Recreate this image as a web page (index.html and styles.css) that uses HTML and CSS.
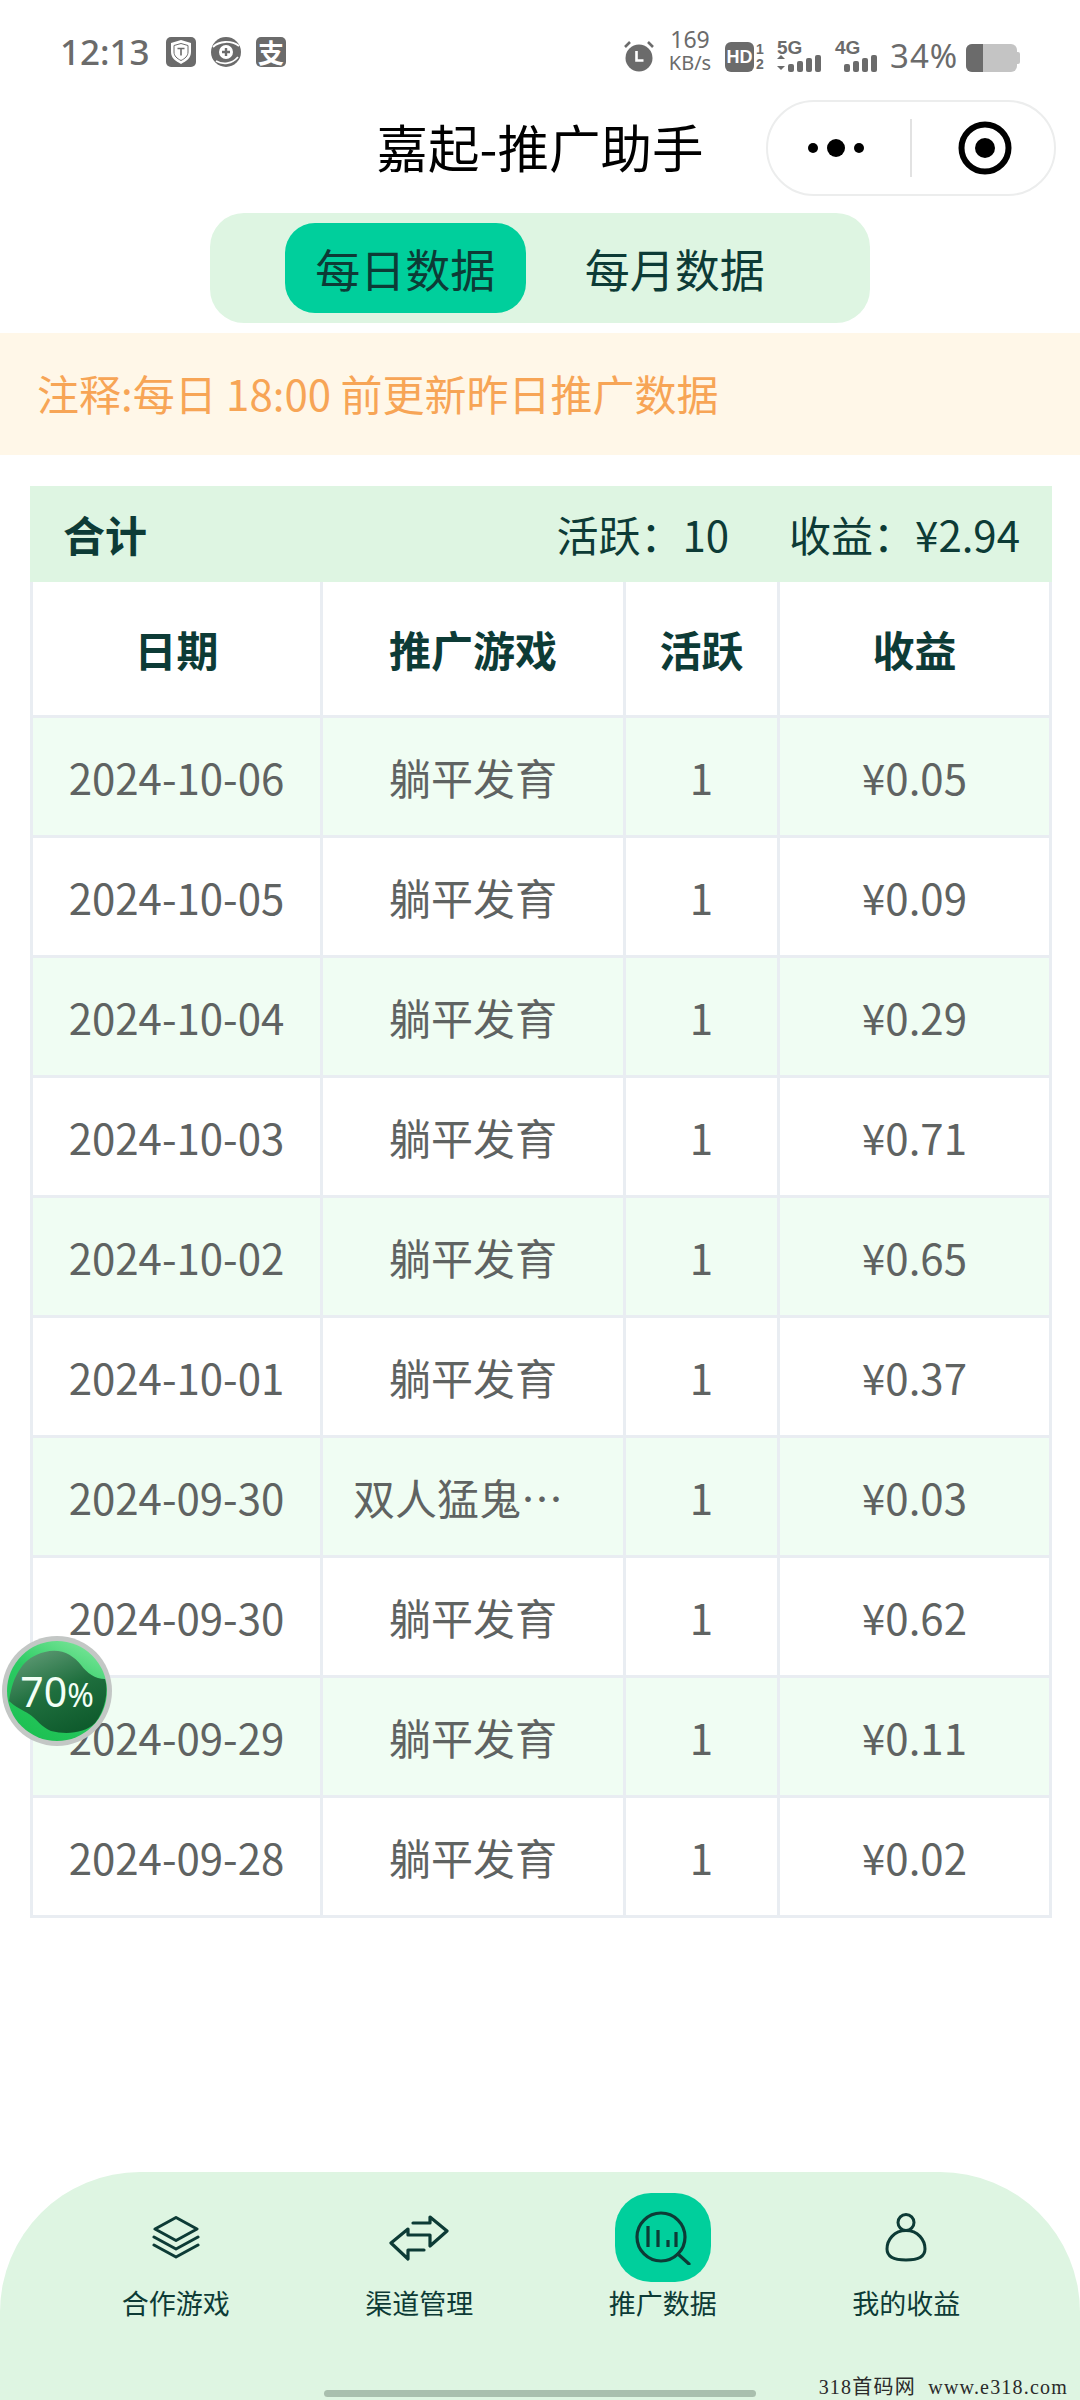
FILE: index.html
```html
<!DOCTYPE html>
<html lang="zh-CN">

<head>
  <meta charset="UTF-8">
  <meta name="viewport" content="width=device-width, initial-scale=1.0">
  <title>嘉起-推广助手</title>
  <link rel="stylesheet" href="styles.css">
</head>

<body>
  <div class="page">
    <!-- 状态栏 -->
    <div class="status-bar">
      <div class="status-left">
        <span class="time">12:13</span>
        <svg class="status-icon" width="30" height="30" viewBox="0 0 30 30">
          <rect width="30" height="30" rx="5" fill="#6b6b6b" />
          <path d="M15 3l10 3v9c0 6-4.500 9-10 12-5.500-3-10-6-10-12V6z" fill="#fff" />
          <path d="M15 6.500l7 2v6.500c0 4-3 6.500-7 8.500-4-2-7-4.500-7-8.500V8.500z" fill="none" stroke="#6b6b6b" stroke-width="1" />
          <path d="M11.500 11.500h7M15 11.500v7" stroke="#6b6b6b" stroke-width="1.600" fill="none" />
        </svg>
        <svg class="status-icon" width="30" height="30" viewBox="0 0 30 30">
          <circle cx="15" cy="15" r="15" fill="#6b6b6b" />
          <path d="M2 10c6-6 18-7 26-1" stroke="#fff" stroke-width="1.800" fill="none" />
          <path d="M5 24c7 4 16 3 22-4" stroke="#fff" stroke-width="1.800" fill="none" />
          <circle cx="15" cy="15" r="7" fill="#fff" />
          <path d="M11 15h8M15 11v8" stroke="#6b6b6b" stroke-width="2.400" />
        </svg>
        <span class="alipay">支</span>
      </div>
      <div class="status-right">
        <svg width="30" height="32" viewBox="0 0 30 32">
          <circle cx="15" cy="18" r="13.500" fill="#6b6b6b" />
          <path d="M12.500 11v9.500h7" stroke="#fff" stroke-width="2.600" fill="none" />
          <path d="M1 7l5-5M29 7l-5-5" stroke="#6b6b6b" stroke-width="2.600" />
        </svg>
        <div class="speed"><span class="speed-num">169</span><span>KB/s</span></div>
        <div class="hd-wrap">
          <span class="hd">HD</span>
          <div class="sim-nums"><span>1</span><span>2</span></div>
        </div>
        <div class="signal">
          <span class="signal-name">5G</span>
          <svg width="46" height="17" viewBox="0 0 46 17">
            <path d="M0 4l4-4 4 4zM0 11h8l-4 4z" fill="#6b6b6b" />
            <rect x="11" y="9" width="6" height="8" rx="2" fill="#6b6b6b" />
            <rect x="20" y="6" width="6" height="11" rx="2" fill="#6b6b6b" />
            <rect x="29" y="3" width="6" height="14" rx="2" fill="#6b6b6b" />
            <rect x="38" y="0" width="6" height="17" rx="2" fill="#6b6b6b" />
          </svg>
        </div>
        <div class="signal signal-second">
          <span class="signal-name">4G</span>
          <svg width="44" height="17" viewBox="0 0 44 17">
            <rect x="9" y="9" width="6" height="8" rx="2" fill="#6b6b6b" />
            <rect x="18" y="6" width="6" height="11" rx="2" fill="#6b6b6b" />
            <rect x="27" y="3" width="6" height="14" rx="2" fill="#6b6b6b" />
            <rect x="36" y="0" width="6" height="17" rx="2" fill="#6b6b6b" />
          </svg>
        </div>
        <span class="battery-text">34%</span>
        <div class="battery">
          <div class="battery-body">
            <div class="battery-level"></div>
          </div>
          <div class="battery-tip"></div>
        </div>
      </div>
    </div>

    <!-- 标题栏 -->
    <div class="nav-bar">
      <div class="nav-title">嘉起-推广助手</div>
      <div class="capsule">
        <svg width="56" height="20" viewBox="0 0 56 20">
          <circle cx="5" cy="10" r="5" fill="#000" />
          <circle cx="28" cy="10" r="9" fill="#000" />
          <circle cx="51" cy="10" r="5" fill="#000" />
        </svg>
        <div class="capsule-line"></div>
        <svg width="54" height="54" viewBox="0 0 54 54">
          <circle cx="27" cy="27" r="23.500" fill="none" stroke="#000" stroke-width="6" />
          <circle cx="27" cy="27" r="10" fill="#000" />
        </svg>
      </div>
    </div>

    <div class="tabs">
      <div class="tab active">每日数据</div>
      <div class="tab">每月数据</div>
    </div>

    <div class="notice">注释:每日 18:00 前更新昨日推广数据</div>

    <div class="data-wrap">
      <div class="summary">
        <strong>合计</strong>
        <div class="summary-right">
          <span>活跃：10</span>
          <span>收益：¥2.94</span>
        </div>
      </div>
      <table class="data-table">
        <colgroup>
          <col class="col-date">
          <col class="col-game">
          <col class="col-active">
          <col class="col-income">
        </colgroup>
        <thead>
          <tr>
            <th>日期</th>
            <th>推广游戏</th>
            <th>活跃</th>
            <th>收益</th>
          </tr>
        </thead>
        <tbody>
          <tr><td>2024-10-06</td><td>躺平发育</td><td>1</td><td>¥0.05</td></tr>
          <tr><td>2024-10-05</td><td>躺平发育</td><td>1</td><td>¥0.09</td></tr>
          <tr><td>2024-10-04</td><td>躺平发育</td><td>1</td><td>¥0.29</td></tr>
          <tr><td>2024-10-03</td><td>躺平发育</td><td>1</td><td>¥0.71</td></tr>
          <tr><td>2024-10-02</td><td>躺平发育</td><td>1</td><td>¥0.65</td></tr>
          <tr><td>2024-10-01</td><td>躺平发育</td><td>1</td><td>¥0.37</td></tr>
          <tr><td>2024-09-30</td><td class="cell-clip">双人猛鬼…</td><td>1</td><td>¥0.03</td></tr>
          <tr><td>2024-09-30</td><td>躺平发育</td><td>1</td><td>¥0.62</td></tr>
          <tr><td>2024-09-29</td><td>躺平发育</td><td>1</td><td>¥0.11</td></tr>
          <tr><td>2024-09-28</td><td>躺平发育</td><td>1</td><td>¥0.02</td></tr>
        </tbody>
      </table>
    </div>

    <!-- 底部导航 -->
    <div class="tab-bar">
      <div class="tab-item">
        <div class="tab-icon">
          <svg width="48" height="43" viewBox="0 0 48 43" fill="none" stroke="#0d3b36" stroke-width="3" stroke-linejoin="round" stroke-linecap="round">
            <path d="M24 1.500l21 11.500-21 11.500L3 13z" />
            <path d="M2 21l22 12 22-12" />
            <path d="M2 29l22 12 22-12" />
          </svg>
        </div>
        <span>合作游戏</span>
      </div>
      <div class="tab-item">
        <div class="tab-icon">
          <svg width="60" height="46" viewBox="0 0 60 46" fill="none" stroke="#0d3b36" stroke-width="3.200" stroke-linejoin="round" stroke-linecap="round">
            <path d="M24 8h17V2l17 14-17 15v-11H19v-6L2 28l17 16v-9h16" />
          </svg>
        </div>
        <span>渠道管理</span>
      </div>
      <div class="tab-item">
        <div class="tab-icon tab-icon-active">
          <svg width="56" height="54" viewBox="0 0 56 54" fill="none" stroke="#0d3b36" stroke-linecap="round">
            <circle cx="26" cy="26" r="24" stroke-width="3.200" />
            <path d="M43 43l11 10" stroke-width="3.200" />
            <path d="M13 15v21M23 19v17M33 29v7M41 21v15" stroke-width="3.200" stroke-linecap="butt" />
          </svg>
        </div>
        <span>推广数据</span>
      </div>
      <div class="tab-item">
        <div class="tab-icon">
          <svg width="42" height="49" viewBox="0 0 42 49" fill="none" stroke="#0d3b36" stroke-width="3">
            <circle cx="21" cy="9.500" r="8" />
            <path d="M21 17.500C9 17.500 2 27 2 36c0 8 7 11 19 11s19-3 19-11c0-9-7-18.500-19-18.500z" />
          </svg>
        </div>
        <span>我的收益</span>
      </div>
      <div class="home-bar"></div>
    </div>

    <div class="watermark">318首码网  www.e318.com</div>

    <!-- 悬浮球 -->
    <div class="float-ball">
      <svg width="112" height="112" viewBox="0 0 112 112">
        <defs>
          <linearGradient id="ballRim" x1="0.8" y1="0" x2="0.3" y2="1">
            <stop offset="0" stop-color="#7be69a" />
            <stop offset="0.45" stop-color="#2ccb63" />
            <stop offset="1" stop-color="#1cc052" />
          </linearGradient>
          <linearGradient id="ballFill" x1="0.2" y1="0" x2="0.7" y2="1">
            <stop offset="0" stop-color="#5f9a75" />
            <stop offset="0.5" stop-color="#1f6f3e" />
            <stop offset="1" stop-color="#0e5a2c" />
          </linearGradient>
        </defs>
        <circle cx="56" cy="56" r="55" fill="#c3c7c5" />
        <circle cx="56" cy="56" r="50" fill="url(#ballRim)" />
        <path d="M8 66C12 40 22 22 44 17c16-4 28 3 36 13 6 8 14 14 24 14 4 12 0 32-10 44-10 10-28 12-44 8-10-4-14-12-22-17-6-4-14-7-20-13z" fill="url(#ballFill)" />
      </svg>
      <span class="ball-text">70<span class="ball-percent">%</span></span>
    </div>
  </div>
</body>

</html>
```

FILE: styles.css
```css
* {
  box-sizing: border-box;
}

html,
body {
  margin: 0;
  padding: 0;
  background-color: #fff;
}

body {
  font-family: 'Noto Sans CJK SC', 'Noto Sans', sans-serif;
  color: #0d3b36;
}

.page {
  position: relative;
  width: 1080px;
  height: 2400px;
  overflow: hidden;
  display: flex;
  flex-direction: column;
}

.status-bar {
  height: 100px;
  padding: 32px 60px 0 60px;
  display: flex;
  justify-content: space-between;
  align-items: flex-start;
  color: #6b6b6b;
}

.status-left {
  display: flex;
  align-items: center;
  height: 40px;
}

.time {
  width: 91px;
  font-family: 'Noto Sans', sans-serif;
  font-size: 35px;
  font-weight: 500;
  line-height: 40px;
  margin-right: 15px;
  white-space: nowrap;
}

.status-icon {
  margin-right: 15px;
}

.alipay {
  width: 30px;
  height: 30px;
  border-radius: 5px;
  background-color: #6b6b6b;
  color: #fff;
  font-size: 26px;
  font-weight: 700;
  line-height: 30px;
  text-align: center;
}

.status-right {
  display: flex;
  align-items: flex-end;
  height: 40px;
}

.speed {
  width: 44px;
  display: flex;
  flex-direction: column;
  align-items: center;
  margin-left: 14px;
  margin-bottom: -3px;
  font-family: 'Noto Sans', sans-serif;
  font-size: 20px;
  line-height: 24px;
  white-space: nowrap;
}

.speed-num {
  font-size: 23px;
  line-height: 24px;
}

.hd-wrap {
  display: flex;
  align-items: center;
  margin-left: 13px;
}

.hd {
  width: 29px;
  height: 30px;
  border-radius: 6px;
  background-color: #6b6b6b;
  color: #fff;
  font-family: 'Liberation Sans', sans-serif;
  font-size: 18px;
  font-weight: 700;
  line-height: 30px;
  text-align: center;
}

.sim-nums {
  width: 11px;
  display: flex;
  flex-direction: column;
  margin-left: 2px;
  font-family: 'Liberation Sans', sans-serif;
  font-size: 14px;
  font-weight: 700;
  line-height: 15px;
}

.signal {
  width: 46px;
  display: flex;
  flex-direction: column;
  margin-left: 10px;
}

.signal-second {
  width: 44px;
  margin-left: 12px;
}

.signal-name {
  font-family: 'Liberation Sans', sans-serif;
  font-size: 19px;
  font-weight: 700;
  line-height: 14px;
}

.battery-text {
  width: 66px;
  font-family: 'Noto Sans', sans-serif;
  font-size: 33px;
  line-height: 36px;
  margin-left: 11px;
  margin-bottom: -2px;
  letter-spacing: 1px;
  white-space: nowrap;
}

.battery {
  display: flex;
  align-items: center;
  margin-left: 10px;
}

.battery-body {
  width: 51px;
  height: 28px;
  border-radius: 6px;
  background-color: #c4c4c4;
  overflow: hidden;
}

.battery-level {
  width: 17px;
  height: 100%;
  background-color: #6b6b6b;
}

.battery-tip {
  width: 3px;
  height: 12px;
  background-color: #c4c4c4;
  border-radius: 0 2px 2px 0;
}

.nav-bar {
  position: relative;
  height: 96px;
  display: flex;
  justify-content: center;
  align-items: center;
}

.nav-title {
  font-size: 51.500px;
  line-height: 70px;
  padding-bottom: 5px;
  color: #000;
}

.capsule {
  position: absolute;
  top: 0;
  right: 24px;
  width: 290px;
  height: 96px;
  border: 2px solid #eceded;
  border-radius: 48px;
  display: flex;
  align-items: center;
  padding-left: 40px;
}

.capsule-line {
  width: 2px;
  height: 58px;
  background-color: #e2e2e2;
  margin-left: 46px;
  margin-right: 46px;
}

.tabs {
  width: 660px;
  height: 110px;
  margin: 17px auto 0;
  padding: 0 75px;
  background-color: #def5e2;
  border-radius: 34px;
  display: flex;
  align-items: center;
}

.tab {
  width: 241px;
  height: 90px;
  border-radius: 30px;
  font-size: 45px;
  line-height: 92px;
  text-align: center;
  color: #0d3b36;
}

.tab.active {
  background-color: #00cf9c;
}

.tab + .tab {
  margin-left: 29px;
}

.notice {
  height: 122px;
  margin-top: 10px;
  padding-left: 37px;
  background-color: #fff7e8;
  color: #f7a556;
  font-size: 42px;
  line-height: 120px;
}

.data-wrap {
  margin: 31px 28px 0 30px;
}

.summary {
  height: 96px;
  padding: 0 32px 0 33px;
  background-color: #def5e2;
  display: flex;
  justify-content: space-between;
  align-items: center;
  font-size: 42px;
  line-height: 60px;
}

.summary strong {
  font-weight: 700;
}

.summary-right {
  display: flex;
  gap: 60px;
}

.data-table {
  width: 100%;
  table-layout: fixed;
  border-collapse: collapse;
  border: 3px solid #e9edf2;
  border-top: 0;
}

.col-date {
  width: 290px;
}

.col-game {
  width: 303px;
}

.col-active {
  width: 154px;
}

.data-table th,
.data-table td {
  border: 3px solid #e9edf2;
  text-align: center;
  font-size: 42px;
  padding: 0;
}

.data-table thead tr {
  border-top: 0;
}

.data-table th {
  height: 134px;
  border-top: 0;
  font-weight: 700;
  color: #0d3b36;
}

.data-table td {
  height: 120px;
  color: #5f6362;
}

.data-table td.cell-clip {
  padding-right: 30px;
}

.data-table tbody tr:nth-child(odd) {
  background-color: #f0fdf3;
}

.tab-bar {
  position: absolute;
  left: 0;
  right: 0;
  bottom: 0;
  height: 228px;
  padding: 21px 52px 0 54px;
  background-color: #def5e2;
  border-radius: 140px 140px 0 0;
  display: flex;
}

.tab-item {
  flex: 1;
  display: flex;
  flex-direction: column;
  align-items: center;
  font-size: 27px;
  color: #0d3b36;
}

.tab-icon {
  width: 96px;
  height: 89px;
  display: flex;
  align-items: center;
  justify-content: center;
}

.tab-icon-active {
  background-color: #00cf9c;
  border-radius: 36px;
}

.tab-item span {
  margin-top: 1px;
  line-height: 40px;
}

.home-bar {
  position: absolute;
  left: 324px;
  bottom: 3px;
  width: 432px;
  height: 7px;
  border-radius: 4px;
  background-color: #a9bfae;
}

.watermark {
  position: absolute;
  right: 12px;
  bottom: 1px;
  font-family: 'Liberation Serif', 'Noto Sans CJK SC', serif;
  font-size: 20px;
  line-height: 24px;
  letter-spacing: 1.2px;
  white-space: pre;
  color: #2b2b2b;
}

.float-ball {
  position: absolute;
  left: 1px;
  top: 1635px;
  width: 112px;
  height: 112px;
}

.ball-text {
  position: absolute;
  left: 0;
  right: 0;
  top: 33px;
  text-align: center;
  font-family: 'Noto Sans', sans-serif;
  font-size: 41px;
  line-height: 46px;
  color: #f2fff6;
}

.ball-percent {
  font-size: 32px;
}
```
